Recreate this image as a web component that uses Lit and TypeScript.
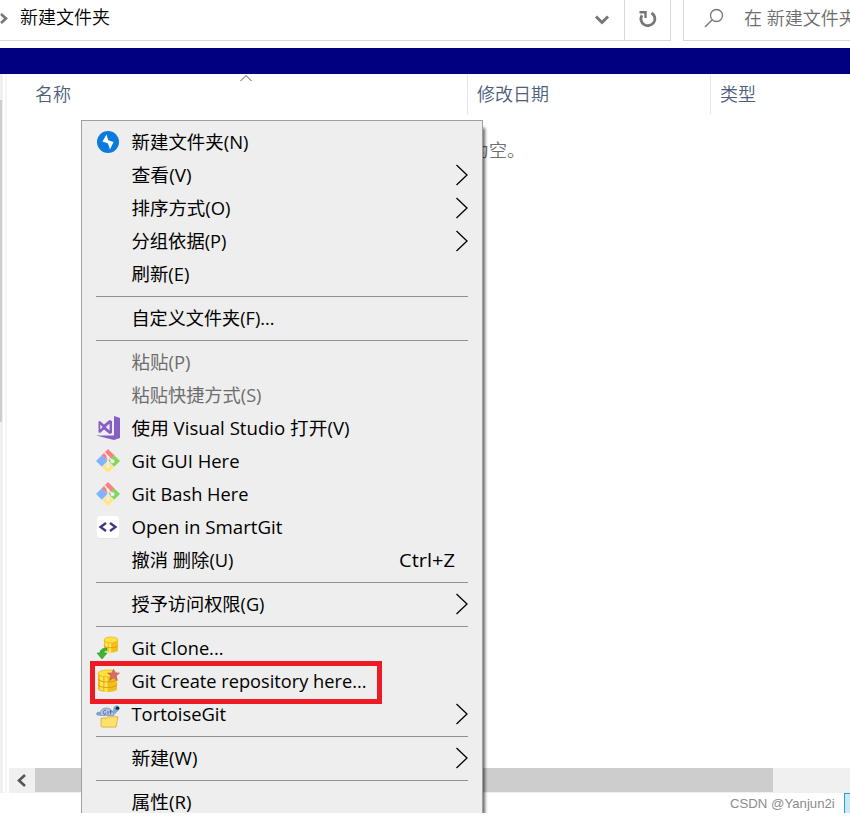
import { LitElement, html, css, svg, nothing } from "lit";
import { customElement, property } from "lit/decorators.js";

type Entry =
  | { sep: true }
  | { label: string; icon?: string; sub?: boolean; disabled?: boolean; key?: string; marked?: boolean; w: number };

const SEP: Entry = { sep: true };

const ENTRIES: Entry[] = [
  { label: "新建文件夹(N)", icon: "bolt", w: 117 },
  { label: "查看(V)", sub: true, w: 60 },
  { label: "排序方式(O)", sub: true, w: 99 },
  { label: "分组依据(P)", sub: true, w: 95 },
  { label: "刷新(E)", w: 58 },
  SEP,
  { label: "自定义文件夹(F)...", w: 143 },
  SEP,
  { label: "粘贴(P)", disabled: true, w: 59 },
  { label: "粘贴快捷方式(S)", disabled: true, w: 130 },
  { label: "使用 Visual Studio 打开(V)", icon: "vs", w: 218 },
  { label: "Git GUI Here", icon: "git", w: 108 },
  { label: "Git Bash Here", icon: "git", w: 117 },
  { label: "Open in SmartGit", icon: "smart", w: 151 },
  { label: "撤消 删除(U)", key: "Ctrl+Z", w: 102 },
  SEP,
  { label: "授予访问权限(G)", sub: true, w: 133 },
  SEP,
  { label: "Git Clone...", icon: "clone", w: 92 },
  { label: "Git Create repository here...", icon: "create", marked: true, w: 235 },
  { label: "TortoiseGit", icon: "tortoise", sub: true, w: 94.5 },
  SEP,
  { label: "新建(W)", sub: true, w: 66 },
  SEP,
  { label: "属性(R)", w: 60 },
];

const ICONS: Record<string, unknown> = {
  bolt: svg`<circle cx="12" cy="12" r="11" fill="#0a7bdc"/><path d="M10.500 4.500L6.500 11.500l5.500 2L14 19.500 17.500 12l-5.300-1.800z" fill="#fff"/>`,
  vs: svg`<path d="M18 0l6 2v20l-6 2L0 19.500l18 0z" fill="#865fc5"/><path d="M2.500 5.500L4 5l4 3.500L13.500 4l2.500 1v12l-2.500 1L8 13.500 4 17l-1.500-.7zM4.300 8.500v5L6.600 11zM13.500 7.500L9.800 11l3.700 3.500z" fill="#865fc5" fill-rule="evenodd"/>`,
  git: svg`<path d="M12 0l6.500 6.500L12 12 5.500 6.500z" fill="#f88080"/><path d="M5.800 6.200L11.500 12l-5.700 5.800L0 12z" fill="#80b3ff"/><path d="M18.200 6.200L24 12l-5.800 5.800L12.500 12z" fill="#87d65c"/><path d="M12 12.500l5.800 5.800L12 24l-5.800-5.700z" fill="#ffe680"/><path d="M8.500 3.500l3.500 4v9M12 8l5 4.500" stroke="#eee" stroke-width="1.500" fill="none"/><circle cx="12" cy="8" r="1.600" fill="#eee"/><circle cx="16.500" cy="12.300" r="2" fill="#eee"/><circle cx="12" cy="17" r="2" fill="#eee"/>`,
  smart: svg`<rect x="1.500" y="2" width="21.500" height="21.500" rx="3" fill="#d8d8d8"/><rect x="1" y="1" width="22" height="22" rx="3" fill="#fff"/><path d="M10 8L4.500 12l5.500 4M14 8l5.500 4-5.500 4" fill="none" stroke="#3c3a83" stroke-width="2.300"/>`,
  clone: svg`<path d="M8 4v10c0 3.500 14 3.500 14 0V4z" fill="#f3c01c"/><path d="M10.500 6v10M14 6.500v11" stroke="#ffe65c" stroke-width="2.500"/><path d="M8 9.500c1 3 13 3 14 0" fill="none" stroke="#d09c08" stroke-width=".8"/><ellipse cx="15" cy="4" rx="7" ry="3" fill="#ffe23c" stroke="#e5af08" stroke-width=".7"/><path d="M11 12c-4 0-7 1.500-7 5H1l5 6 5-6H8c0-2 1-2.500 3-2.500z" fill="#3cb531" stroke="#249020" stroke-width=".6"/>`,
  create: svg`<path d="M2 5v15c0 4 19 4 19 0V5z" fill="#f5bd1b"/><path d="M5.500 7v14M10 8v15" stroke="#ffe45a" stroke-width="3"/><path d="M2 10c1 4 18 4 19 0M2 15.500c1 4 18 4 19 0" fill="none" stroke="#d09c08" stroke-width=".9"/><ellipse cx="11.500" cy="4.500" rx="9.500" ry="3.500" fill="#ffe23c" stroke="#e5af08" stroke-width=".7"/><path d="M17.500 0l1.500 4h4.500L20 7l1.500 4.500-4-2.700-4 2.700L15 7l-3.500-3H16z" fill="#db6b6b" stroke="#ba4b4b" stroke-width=".5"/>`,
  tortoise: svg`<g transform="translate(0 3.500) scale(1 .9)"><path d="M4 11C3 0 17 0 18 11z" fill="#b4c6e8" stroke="#7088b8" stroke-width=".8"/><path d="M10 5.500c-3-1.500-4 4-1 4.500l1-2M12 6v4M14.500 5v5M13.500 7h3" fill="none" stroke="#4a5f96" stroke-width=".9"/><path d="M17 8c0-4 .5-8 3.500-8s3.500 3 2.500 5-3 2-4 5z" fill="#79acd2"/><circle cx="21.500" cy="3" r="1.800" fill="#142d48"/><path d="M0 9c2-3 4-2.500 5 0l-1 2H1z" fill="#7aa2cc"/><path d="M5 23V14h5l2-1.500h10L20 24H6z" fill="#ffe06b" stroke="#d6a729" stroke-width=".8"/></g>`,
};

@customElement("menu-entry")
class MenuEntry extends LitElement {
  @property({ attribute: false }) entry!: Entry;

  static styles = css`
    :host { display: block; }
    .sep { height: 11px; display: flex; align-items: center; padding: 0 14px; }
    .sep::before { content: ""; flex: 1; height: 1px; background: #919191; }
    .row { position: relative; height: 33px; display: flex; align-items: center; padding: 0 14px; color: #000; }
    .off { color: #6d6d6d; }
    .icon { width: 24px; height: 24px; margin: 0 12px 2px 0; flex: none; overflow: visible; }
    .label { flex: 1; min-width: 0; height: 33px; overflow: visible; fill: currentColor; }
    .key { width: 56px; height: 33px; margin-right: 13px; overflow: visible; flex: none; }
    .arrow { width: 14px; height: 22px; margin: 0 -1px 2px 0; flex: none; fill: none; stroke: #000; stroke-width: 1.3; }
    .mark { position: absolute; left: 8px; top: -4px; width: 282px; height: 33px; border: 5px solid #ed1c24; }
  `;

  render() {
    const e = this.entry;
    if ("sep" in e) return html`<div class="sep"></div>`;
    return html`<div class="row ${e.disabled ? "off" : ""}">
      <svg class="icon" viewBox="0 0 24 24">${e.icon ? ICONS[e.icon] : nothing}</svg>
      <svg class="label"><text x="-0.5" y="23" textLength=${e.w} lengthAdjust="spacingAndGlyphs">${e.label}</text></svg>
      ${e.key ? html`<svg class="key"><text x="0" y="23" textLength="56" lengthAdjust="spacingAndGlyphs">${e.key}</text></svg>` : nothing}
      ${e.sub ? html`<svg class="arrow" viewBox="0 0 14 22"><path d="M1.500 1l10.500 10L1.500 21"/></svg>` : nothing}
      ${e.marked ? html`<div class="mark"></div>` : nothing}
    </div>`;
  }
}

@customElement("app-root")
class AppRoot extends LitElement {
  static styles = css`
    :host {
      display: block; position: relative; width: 850px; height: 821px; overflow: hidden; background: #fff;
      font: 400 18px/24px "Open Sans", "Noto Sans CJK SC", sans-serif; color: #000;
    }
    .bar, .body { font-weight: 350; }
    .bar { height: 48px; display: flex; }
    .path, .reload, .search { height: 40px; border-bottom: 1px solid #d9d9d9; display: flex; box-sizing: content-box; }
    .path { width: 624px; position: relative; }
    .crumb { margin: 5px 0 0 11px; }
    .chev { width: 10px; height: 14px; margin: 12px 0 0 -1px; }
    .drop { width: 16px; height: 12px; margin: 14px 14px 0 auto; }
    .reload { width: 45px; border-left: 1px solid #d9d9d9; border-right: 1px solid #d9d9d9; }
    .reload svg { width: 20px; height: 20px; margin: 9px 0 0 13px; }
    .search { margin-left: 12px; width: 166px; border-left: 1px solid #d9d9d9; color: #6d6d6d; white-space: nowrap; overflow: hidden; }
    .search svg { width: 20px; height: 20px; margin: 8px 19px 0 20px; flex: none; }
    .search span { margin: 6px 0 0 1px; }
    .band { height: 26px; background: #000080; }
    .body { height: 719px; display: flex; }
    .rail { width: 3px; background: #f0f0f0; }
    .rail div { margin-top: 26px; height: 322px; width: 2px; background: #cdcdcd; }
    .gap { width: 2px; margin-left: 2px; background: #f5f5f5; }
    .main { flex: 1; min-width: 0; display: flex; flex-direction: column; }
    .head { height: 40px; display: flex; color: #4c607a; }
    .head div { height: 40px; box-sizing: border-box; padding: 8px 9px 0; position: relative; }
    .name { width: 461px; border-right: 1px solid #e5e5e5; }
    .head .name { padding-left: 28px; }
    .date { width: 243px; border-right: 1px solid #e5e5e5; }
    .sort { position: absolute; left: 233px; top: 0; width: 12px; height: 8px; }
    .empty { height: 654px; padding: 24px 0 0 464px; box-sizing: border-box; color: #6d6d6d; }
    .scroll { height: 25px; margin-left: 2px; display: flex; background: #f0f0f0; }
    .scroll svg { width: 26px; height: 25px; flex: none; }
    .thumb { width: 738px; height: 24px; background: #cdcdcd; }
    .clip { position: absolute; left: 81px; top: 120px; width: 412px; height: 693px; overflow: hidden; }
    .menu { width: 402px; height: 720px; box-sizing: border-box; padding-top: 5px; border: 1px solid #a0a0a0; background: #eee; box-shadow: 4px 6px 3px -2px #0009; }
    .foot { position: absolute; left: 730px; top: 793px; width: 120px; height: 20px; display: flex; justify-content: space-between; font: 13.2px/22px "Liberation Sans", sans-serif; color: #8c8c8c; white-space: nowrap; }
    .chip { width: 5px; height: 19px; border: solid #26a0da; border-width: 1px 0 0 1px; background: #cbe8f6; }
  `;

  render() {
    return html`
      <div class="bar">
        <div class="path">
          <svg class="chev" viewBox="0 0 10 14"><path d="M2 2l5 4.500-5 4.500" fill="none" stroke="#767676" stroke-width="2.600"/></svg>
          <span class="crumb">新建文件夹</span>
          <svg class="drop" viewBox="0 0 16 12"><path d="M2 2.500l6 6 6-6" fill="none" stroke="#767676" stroke-width="3"/></svg>
        </div>
        <div class="reload"><svg viewBox="0 0 20 20"><path d="M4 6.200a7 6.800 0 1 0 9.500-2.200" fill="none" stroke="#767676" stroke-width="2.800"/><path d="M1.500 3.200H7.500V9" fill="none" stroke="#767676" stroke-width="2.400"/></svg></div>
        <div class="search">
          <svg viewBox="0 0 20 20"><circle cx="12.500" cy="7.500" r="6" fill="none" stroke="#767676" stroke-width="1.300"/><path d="M8 12l-7 7" stroke="#767676" stroke-width="1.500"/></svg>
          <span>在 新建文件夹</span>
        </div>
      </div>
      <div class="band"></div>
      <div class="body">
        <div class="rail"><div></div></div>
        <div class="gap"></div>
        <div class="main">
          <div class="head">
            <div class="name">名称<svg class="sort" viewBox="0 0 12 8"><path d="M.5 7L6 1.500 11.500 7" fill="none" stroke="#555"/></svg></div>
            <div class="date">修改日期</div>
            <div>类型</div>
          </div>
          <div class="empty">为空。</div>
          <div class="scroll"><svg viewBox="0 0 26 25"><path d="M16 7l-6 5.500 6 5.500" fill="none" stroke="#555" stroke-width="2.600"/></svg><div class="thumb"></div></div>
        </div>
      </div>
      <div class="clip"><div class="menu">${ENTRIES.map((e) => html`<menu-entry .entry=${e}></menu-entry>`)}</div></div>
      <div class="foot"><span>CSDN @Yanjun2i</span><div class="chip"></div></div>
    `;
  }
}
